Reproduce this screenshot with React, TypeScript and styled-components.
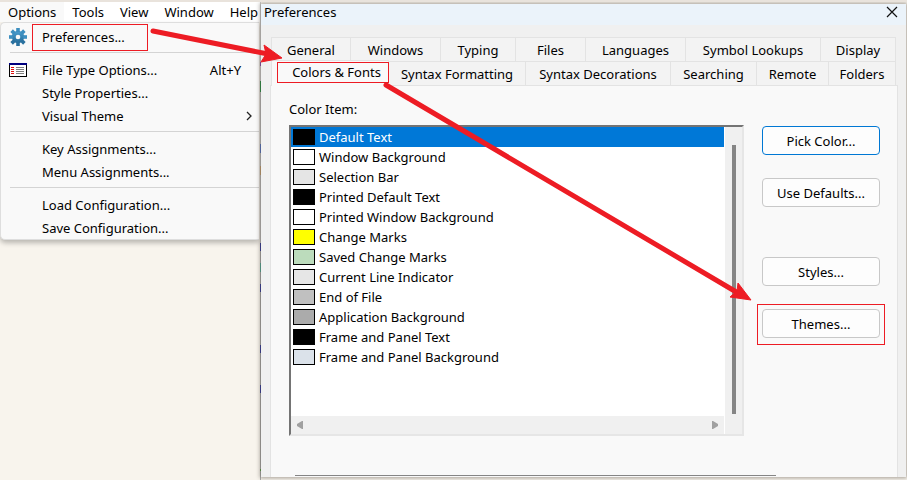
import React, { useState } from "react";
import styled, { createGlobalStyle, css } from "styled-components";

const RED = "#ed1c24";

const GlobalStyle = createGlobalStyle`
  *, *::before, *::after { box-sizing: border-box; }
  body {
    margin: 0;
    background: #f8f4ed;
    color: #000;
    font: 13px/20px "Noto Sans", "Open Sans", sans-serif;
  }
  button { font: inherit; color: inherit; margin: 0; cursor: default; }
  ul { list-style: none; margin: 0; padding: 0; }
`;

const Desktop = styled.div`
  position: relative;
  display: flex;
  min-height: 100vh;
  overflow: hidden;
  border-top: 2px solid #e9e3dc;
`;

const Editor = styled.div`
  flex: 0 0 260px;
  min-width: 0;
`;

const MenuBar = styled.nav`
  display: flex;
  height: 20px;
  overflow: hidden;
  background: #fff;
`;

const MenuBarItem = styled.button<{ $open?: boolean }>`
  flex: none;
  border: 0;
  padding: 0 8px;
  background: ${(p) => (p.$open ? "#f9f9f9" : "transparent")};
`;

const Popup = styled.div`
  width: 259px;
  padding: 2px 0 0 9px;
  border: 1px solid #dedede;
  border-right: 0;
  border-radius: 5px 0 0 5px;
  background: #f9f9f9;
  box-shadow: 0 3px 5px rgba(0, 0, 0, 0.25);
`;

const MenuItem = styled.button<{ $submenu?: boolean }>`
  display: grid;
  grid-template-columns: 32px 1fr auto;
  align-items: center;
  width: 100%;
  height: 23px;
  padding: 0 ${(p) => (p.$submenu ? 6 : 18)}px 0 0;
  border: 0;
  background: transparent;
  text-align: left;
  white-space: nowrap;
`;

const MenuIcon = styled.span`
  display: flex;
  margin-left: -1px;
`;

const Separator = styled.hr`
  height: 1px;
  margin: 4px 0 5px;
  border: 0;
  background: #d4d4d4;
`;

const Marked = styled.span<{ $inset: string }>`
  position: relative;
  &::after {
    content: "";
    position: absolute;
    inset: ${(p) => p.$inset};
    border: 1px solid ${RED};
    pointer-events: none;
  }
`;

const CodeSliver = styled.div`
  flex: 0 0 1px;
  background: linear-gradient(
    #ccc 60px, #8f4fb0 60px 64px, #ccc 64px 79px, #2c9048 79px 90px, #bbb 90px 142px,
    #5674c0 142px 151px, #bbb 151px 164px, #c3a074 164px 173px, #bbb 173px 241px,
    #353c9c 241px 249px, #aaa 249px 261px, #55a898 261px 270px, #aaa 270px 282px,
    #353c9c 282px 290px, #aaa 290px 343px, #353c9c 343px 351px, #aaa 351px 383px,
    #353c9c 383px 391px, #aaa 391px 467px, #5aa04a 467px 469px, #aaa 469px
  );
`;

const Dialog = styled.section`
  flex: 1;
  min-width: 0;
  display: flex;
  flex-direction: column;
  margin: 2px 1px 3px 0;
  background: #f0f0f0;
  box-shadow: 0 0 4px 1px rgba(60, 50, 40, 0.45);
`;

const TitleBar = styled.header`
  display: flex;
  justify-content: space-between;
  height: 21px;
  padding: 0 8px 0 3px;
  background: #ebf3fa;
  line-height: 16px;
`;

const Title = styled.h1`
  margin: 0;
  font: inherit;
`;

const CloseButton = styled.button`
  display: flex;
  align-items: flex-start;
  padding: 2px 0;
  border: 0;
  background: transparent;
`;

const Tabs = styled.div`
  padding: 12px 10px 0 10px;
`;

const TabRow = styled.div`
  display: flex;
  height: 24px;
`;

const Tab = styled.button<{ $width: number; $selected?: boolean }>`
  flex: ${(p) => p.$width} 1 ${(p) => p.$width}px;
  min-width: 0;
  padding: 0;
  border: solid #e3e3e3;
  border-width: 1px 1px 0 0;
  background: #f3f3f3;
  white-space: nowrap;
  &:first-child { border-left-width: 1px; }
  ${(p) =>
    p.$selected &&
    css`
      position: relative;
      height: 26px;
      margin-top: -1px;
      padding: 0 0 4px 13px;
      background: #f9f9f9;
    `}
`;

const Panel = styled.div`
  flex: 1;
  display: flex;
  flex-direction: column;
  justify-content: space-between;
  margin: 0 8px 0 9px;
  padding: 13px 17px 0 18px;
  border: solid #e3e3e3;
  border-width: 1px 1px 0 1px;
  background: #f9f9f9;
`;

const Columns = styled.div`
  display: flex;
  gap: 18px;
`;

const ListColumn = styled.div`
  flex: 1;
  min-width: 0;
`;

const ListLabel = styled.div`
  margin-bottom: 6px;
`;

const ListFrame = styled.div`
  display: grid;
  grid-template: 289px 18px / 1fr 17px;
  column-gap: 1px;
  border: 2px solid;
  border-color: #747474 #e6e6e6 #e6e6e6 #747474;
  background: #fff;
`;

const Option = styled.li<{ $selected: boolean }>`
  display: flex;
  align-items: center;
  gap: 4px;
  height: 20px;
  padding-left: 2px;
  color: ${(p) => (p.$selected ? "#fff" : "#000")};
  background: ${(p) => (p.$selected ? "#0078d7" : "transparent")};
`;

const Swatch = styled.span<{ $color: string }>`
  width: 22px;
  height: 16px;
  border: 1px solid #000;
  background: ${(p) => p.$color};
`;

const VerticalBar = styled.div`
  grid-row: span 2;
  display: flex;
  justify-content: center;
  padding: 18px 0 20px 1px;
  background: #f0f0f0;
`;

const Thumb = styled.div`
  width: 4px;
  background: #858585;
`;

const HorizontalBar = styled.div`
  display: flex;
  align-items: center;
  justify-content: space-between;
  padding: 0 6px;
  background: #f0f0f0;
`;

const Actions = styled.div`
  flex: 0 0 118px;
  display: flex;
  flex-direction: column;
  gap: 23px;
  padding-top: 27px;
`;

const Action = styled.button<{ $primary?: boolean; $group?: boolean }>`
  display: block;
  width: 118px;
  height: 29px;
  margin-top: ${(p) => (p.$group ? "27px" : "0")};
  padding: 0;
  border: 1px solid ${(p) => (p.$primary ? "#0078d4" : "#c8c8c8")};
  border-radius: 4px;
  background: #fdfdfd;
`;

const BottomRule = styled.hr`
  height: 1px;
  width: 481px;
  max-width: 100%;
  margin: 0 0 1px 6px;
  border: 0;
  background: #858585;
`;

const Arrows = styled.svg`
  position: absolute;
  top: -2px;
  left: 0;
  pointer-events: none;
`;

const GEAR_TEETH = [0, 45, 90, 135, 180, 225, 270, 315];

const GearIcon = () => (
  <svg width="18" height="18" viewBox="0 0 18 18" aria-hidden="true">
    <defs>
      <linearGradient id="gear" x1="0" y1="0" x2="0" y2="1">
        <stop offset="0" stopColor="#4b9fd0" />
        <stop offset="1" stopColor="#256b98" />
      </linearGradient>
      <mask id="hub">
        <rect width="18" height="18" fill="#fff" />
        <circle cx="9" cy="9" r="2.3" fill="#000" />
      </mask>
    </defs>
    <g fill="url(#gear)" mask="url(#hub)">
      <circle cx="9" cy="9" r="6.2" />
      {GEAR_TEETH.map((a) => (
        <path key={a} fill={a > 90 && a < 270 ? "#2a719f" : "#3d8fc0"} d="M7.200 4V0h3.600V4z" transform={`rotate(${a} 9 9)`} />
      ))}
    </g>
  </svg>
);

const FileTypeIcon = () => (
  <svg width="18" height="14" viewBox="0 0 18 14" shapeRendering="crispEdges" aria-hidden="true">
    <path fill="#000" d="M0 0h18v14H0z" />
    <path fill="#fff" d="M1 2h16v11H1z" />
    <path fill="#000080" d="M0 0h18v2H0z" />
    <path stroke="#e01010" d="M2 4.500h3M2 6.500h3M2 8.500h3M2 10.500h3" />
    <path stroke="#808080" d="M7 4.500h8M7 6.500h8M7 8.500h8M7 10.500h8" />
  </svg>
);

const tabRows: { name: string; width: number }[][] = [
  [
    { name: "General", width: 80 },
    { name: "Windows", width: 90 },
    { name: "Typing", width: 75 },
    { name: "Files", width: 70 },
    { name: "Languages", width: 100 },
    { name: "Symbol Lookups", width: 135 },
    { name: "Display", width: 75 },
  ],
  [
    { name: "Colors & Fonts", width: 118 },
    { name: "Syntax Formatting", width: 137 },
    { name: "Syntax Decorations", width: 145 },
    { name: "Searching", width: 86 },
    { name: "Remote", width: 72 },
    { name: "Folders", width: 67 },
  ],
];

const colorItems = [
  { name: "Default Text", color: "#000000" },
  { name: "Window Background", color: "#ffffff" },
  { name: "Selection Bar", color: "#e5e5e5" },
  { name: "Printed Default Text", color: "#000000" },
  { name: "Printed Window Background", color: "#ffffff" },
  { name: "Change Marks", color: "#ffff00" },
  { name: "Saved Change Marks", color: "#bcdcbc" },
  { name: "Current Line Indicator", color: "#e6e6e6" },
  { name: "End of File", color: "#c0c0c0" },
  { name: "Application Background", color: "#ababab" },
  { name: "Frame and Panel Text", color: "#000000" },
  { name: "Frame and Panel Background", color: "#dbe2ea" },
];

export default function App() {
  const [tab, setTab] = useState("Colors & Fonts");
  const [item, setItem] = useState("Default Text");

  return (
    <>
      <GlobalStyle />
      <Desktop>
        <Editor>
          <MenuBar>
            <MenuBarItem $open aria-expanded="true">Options</MenuBarItem>
            <MenuBarItem>Tools</MenuBarItem>
            <MenuBarItem>View</MenuBarItem>
            <MenuBarItem>Window</MenuBarItem>
            <MenuBarItem>Help</MenuBarItem>
          </MenuBar>
          <Popup role="menu">
            <MenuItem role="menuitem">
              <MenuIcon><GearIcon /></MenuIcon>
              <span><Marked $inset="-4px -23px -5px -10px">Preferences...</Marked></span>
            </MenuItem>
            <Separator />
            <MenuItem role="menuitem">
              <MenuIcon><FileTypeIcon /></MenuIcon>
              <span>File Type Options...</span>
              <span>Alt+Y</span>
            </MenuItem>
            <MenuItem role="menuitem">
              <MenuIcon />
              <span>Style Properties...</span>
            </MenuItem>
            <MenuItem role="menuitem" aria-haspopup="menu" $submenu>
              <MenuIcon />
              <span>Visual Theme</span>
              <svg width="8" height="10" viewBox="0 0 8 10" aria-hidden="true">
                <path d="M2 1l4 4-4 4" fill="none" stroke="#222" strokeWidth="1.3" />
              </svg>
            </MenuItem>
            <Separator />
            <MenuItem role="menuitem"><MenuIcon /><span>Key Assignments...</span></MenuItem>
            <MenuItem role="menuitem"><MenuIcon /><span>Menu Assignments...</span></MenuItem>
            <Separator />
            <MenuItem role="menuitem"><MenuIcon /><span>Load Configuration...</span></MenuItem>
            <MenuItem role="menuitem"><MenuIcon /><span>Save Configuration...</span></MenuItem>
          </Popup>
        </Editor>
        <CodeSliver />
        <Dialog role="dialog" aria-labelledby="dialog-title">
          <TitleBar>
            <Title id="dialog-title">Preferences</Title>
            <CloseButton aria-label="Close">
              <svg width="12" height="12" viewBox="0 0 12 12" aria-hidden="true">
                <path d="M1 1l10 10M11 1L1 11" stroke="#111" strokeWidth="1.2" />
              </svg>
            </CloseButton>
          </TitleBar>
          <Tabs role="tablist">
            {tabRows.map((row, i) => (
              <TabRow key={i}>
                {row.map(({ name, width }) => (
                  <Tab
                    key={name}
                    role="tab"
                    $width={width}
                    $selected={tab === name}
                    aria-selected={tab === name}
                    onClick={() => setTab(name)}
                  >
                    {name === "Colors & Fonts" ? (
                      <Marked $inset="-1px -8px -2px -15px">{name}</Marked>
                    ) : (
                      name
                    )}
                  </Tab>
                ))}
              </TabRow>
            ))}
          </Tabs>
          <Panel role="tabpanel">
            <Columns>
              <ListColumn>
                <ListLabel id="color-item">Color Item:</ListLabel>
                <ListFrame>
                  <ul role="listbox" aria-labelledby="color-item" tabIndex={0}>
                    {colorItems.map(({ name, color }) => (
                      <Option
                        key={name}
                        role="option"
                        $selected={item === name}
                        aria-selected={item === name}
                        onClick={() => setItem(name)}
                      >
                        <Swatch $color={color} />
                        {name}
                      </Option>
                    ))}
                  </ul>
                  <VerticalBar><Thumb /></VerticalBar>
                  <HorizontalBar>
                    <svg width="6" height="8" viewBox="0 0 6 8" aria-hidden="true">
                      <path d="M6 0v8H5L0 5V3l5-3z" fill="#a0a0a0" />
                    </svg>
                    <svg width="6" height="8" viewBox="0 0 6 8" aria-hidden="true">
                      <path d="M0 0v8h1l5-3V3L1 0z" fill="#a0a0a0" />
                    </svg>
                  </HorizontalBar>
                </ListFrame>
              </ListColumn>
              <Actions>
                <Action $primary>Pick Color...</Action>
                <Action>Use Defaults...</Action>
                <Action $group>Styles...</Action>
                <Marked $inset="-5px -5px -7px">
                  <Action>Themes...</Action>
                </Marked>
              </Actions>
            </Columns>
            <BottomRule />
          </Panel>
        </Dialog>
        <Arrows width="907" height="480" viewBox="0 0 907 480" fill={RED} stroke={RED} aria-hidden="true">
          <path d="M153 31L268 54M386 85L738 293" fill="none" strokeWidth="5" strokeLinecap="round" />
          <path d="M282 58L264 45 266 54 261 62zM751 300L738 283 737 291 730 297z" strokeWidth="1" />
        </Arrows>
      </Desktop>
    </>
  );
}
